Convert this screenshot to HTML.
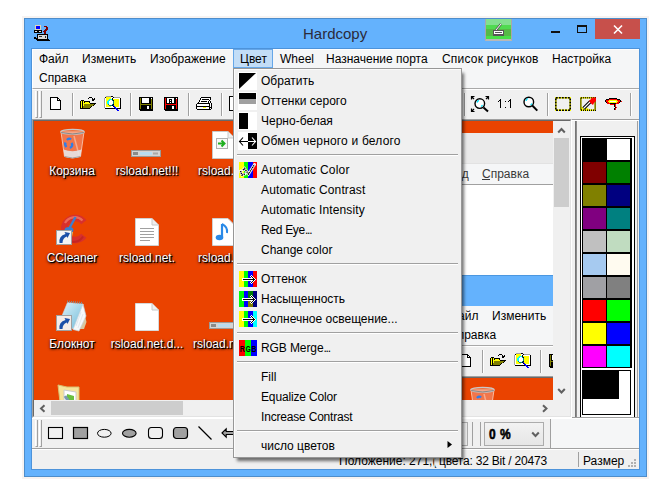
<!DOCTYPE html>
<html><head><meta charset="utf-8">
<style>
*{margin:0;padding:0;box-sizing:border-box}
html,body{width:672px;height:503px;overflow:hidden;background:#fff;font-family:"Liberation Sans",sans-serif;font-size:12px;color:#000}
.a{position:absolute}
svg{position:absolute;overflow:visible}
.t{position:absolute;white-space:nowrap;line-height:14px}
.lbl{position:absolute;white-space:nowrap;line-height:14px;color:#fff;text-shadow:1px 1px 0 #000,1px 1px 2px #000,0 1px 3px rgba(0,0,0,.75);text-align:center;width:90px}
.sep{position:absolute;width:2px;background:#A0A0A0;border-right:1px solid #fff}
.ms{position:absolute;left:237px;width:221px;height:2px;border-top:1px solid #A0A0A0;border-bottom:1px solid #fff}
</style></head><body>
<!-- faint window shadow -->
<div class="a" style="left:22px;top:16px;width:627px;height:463px;background:#f7f3f1"></div>
<!-- window frame -->
<div class="a" style="left:24px;top:18px;width:623px;height:459px;background:#64B2FD;border:1px solid #4E8DCA"></div>
<div class="a" style="left:31px;top:48px;width:609px;height:422px;border:1px solid #4D93DA"></div>
<!-- title icon -->
<svg style="left:34px;top:25px" width="16" height="16" shape-rendering="crispEdges">
<rect x="1" y="0" width="6" height="5" fill="#e0d4b8"/>
<rect x="2" y="1" width="4" height="3" fill="#0000ff"/>
<rect x="0" y="5" width="8" height="3" fill="#000"/>
<rect x="1" y="6" width="2" height="1" fill="#e8e8e8"/><rect x="5" y="6" width="2" height="1" fill="#e8e8e8"/>
<rect x="10" y="1" width="3" height="1" fill="#800000"/><rect x="12" y="2" width="2" height="3" fill="#800000"/><rect x="11" y="4" width="2" height="2" fill="#800000"/><rect x="10" y="5" width="2" height="4" fill="#800000"/><rect x="9" y="6" width="1" height="1" fill="#800000"/>
<rect x="3" y="9" width="11" height="7" fill="#000"/>
<rect x="4" y="10" width="9" height="4" fill="#d8d8d8"/>
<rect x="5" y="11" width="3" height="1" fill="#303030"/><rect x="11" y="11" width="1" height="2" fill="#303030"/>
<rect x="0" y="12" width="2" height="2" fill="#000"/><rect x="2" y="13" width="2" height="2" fill="#000"/>
<rect x="4" y="15" width="12" height="1" fill="#000"/><rect x="14" y="14" width="1" height="1" fill="#000"/>
</svg>
<!-- title -->
<div class="t" style="left:303px;top:26px;font-size:15px;line-height:15px;color:#2b2b3b">Hardcopy</div>
<!-- green button -->
<div class="a" style="left:485px;top:19px;width:27px;height:22px;border-left:1px solid #a8a8a8;border-right:1px solid #a8a8a8;border-bottom:2px solid #b8b8b8;background:linear-gradient(#83e08f 0,#83e08f 6px,#50da50 6px,#50da50 10px,#57b947 10px,#57b947 17px,#48e048 17px)"></div>
<div class="a" style="left:493px;top:30px;width:11px;height:6px;background:#fff;border:1px solid #555;border-bottom-width:2px"></div>
<div class="a" style="left:495px;top:32px;width:7px;height:1px;background:#555"></div>
<svg style="left:495px;top:23px" width="8" height="8"><path d="M1 7 L6 1" stroke="#555" stroke-width="2.2"/><path d="M1 7 L6 1" stroke="#fff" stroke-width="1"/></svg>
<!-- min max close -->
<div class="a" style="left:551px;top:31px;width:9px;height:2px;background:#111"></div>
<div class="a" style="left:577px;top:25px;width:10px;height:8px;border:1px solid #111;border-top-width:2px"></div>
<div class="a" style="left:595px;top:19px;width:45px;height:20px;background:#C7504B"></div>
<svg style="left:613px;top:25px" width="10" height="9"><path d="M1 0.5L9 8.5M9 0.5L1 8.5" stroke="#fff" stroke-width="1.6"/></svg>

<!-- client -->
<div class="a" style="left:32px;top:49px;width:607px;height:420px;background:#F0F0F0"></div>
<!-- menubar -->
<div class="a" style="left:32px;top:49px;width:607px;height:40px;background:#F5F6F7;border-bottom:1px solid #A9A9A9;border-top:1px solid #fff;border-left:1px solid #fff"></div>
<div class="t" style="left:39px;top:52px">Файл</div>
<div class="t" style="left:82px;top:52px">Изменить</div>
<div class="t" style="left:150px;top:52px">Изображение</div>
<div class="a" style="left:233px;top:49px;width:40px;height:19px;background:#C2DDF7;border:1px solid #66A7E8"></div>
<div class="t" style="left:240px;top:52px">Цвет</div>
<div class="t" style="left:280px;top:52px">Wheel</div>
<div class="t" style="left:326px;top:52px">Назначение порта</div>
<div class="t" style="left:442px;top:52px;letter-spacing:0.2px">Список рисунков</div>
<div class="t" style="left:552px;top:52px">Настройка</div>
<div class="t" style="left:39px;top:71px">Справка</div>

<!-- toolbar -->
<div class="a" style="left:32px;top:89px;width:607px;height:30px;background:#F0F0F0;border-top:1px solid #fff"></div>
<div id="toolbar"></div>
<!-- grip -->
<div class="a" style="left:35px;top:91px;width:3px;height:27px;border-left:1px solid #fff;border-right:1px solid #A0A0A0;border-bottom:1px solid #A0A0A0"></div>
<div class="a" style="left:39px;top:91px;width:3px;height:27px;border-left:1px solid #fff;border-right:1px solid #A0A0A0;border-bottom:1px solid #A0A0A0"></div>
<div class="sep" style="left:72px;top:93px;height:23px"></div>
<div class="sep" style="left:130px;top:93px;height:23px"></div>
<div class="sep" style="left:188px;top:93px;height:23px"></div>
<div class="sep" style="left:221px;top:93px;height:23px"></div>
<div class="sep" style="left:464px;top:93px;height:23px"></div>
<div class="sep" style="left:547px;top:93px;height:23px"></div>
<div class="sep" style="left:630px;top:93px;height:23px"></div>
<!-- new doc -->
<svg style="left:50px;top:97px" width="11" height="13" shape-rendering="crispEdges"><rect x="0" y="0" width="8" height="1" fill="#000"/><rect x="0" y="1" width="1" height="1" fill="#000"/><rect x="1" y="1" width="6" height="1" fill="#fff"/><rect x="7" y="1" width="2" height="1" fill="#000"/><rect x="0" y="2" width="1" height="1" fill="#000"/><rect x="1" y="2" width="6" height="1" fill="#fff"/><rect x="7" y="2" width="1" height="1" fill="#000"/><rect x="8" y="2" width="1" height="1" fill="#fff"/><rect x="9" y="2" width="1" height="1" fill="#000"/><rect x="0" y="3" width="1" height="1" fill="#000"/><rect x="1" y="3" width="6" height="1" fill="#fff"/><rect x="7" y="3" width="4" height="1" fill="#000"/><rect x="0" y="4" width="1" height="1" fill="#000"/><rect x="1" y="4" width="9" height="1" fill="#fff"/><rect x="10" y="4" width="1" height="1" fill="#000"/><rect x="0" y="5" width="1" height="1" fill="#000"/><rect x="1" y="5" width="9" height="1" fill="#fff"/><rect x="10" y="5" width="1" height="1" fill="#000"/><rect x="0" y="6" width="1" height="1" fill="#000"/><rect x="1" y="6" width="9" height="1" fill="#fff"/><rect x="10" y="6" width="1" height="1" fill="#000"/><rect x="0" y="7" width="1" height="1" fill="#000"/><rect x="1" y="7" width="9" height="1" fill="#fff"/><rect x="10" y="7" width="1" height="1" fill="#000"/><rect x="0" y="8" width="1" height="1" fill="#000"/><rect x="1" y="8" width="9" height="1" fill="#fff"/><rect x="10" y="8" width="1" height="1" fill="#000"/><rect x="0" y="9" width="1" height="1" fill="#000"/><rect x="1" y="9" width="9" height="1" fill="#fff"/><rect x="10" y="9" width="1" height="1" fill="#000"/><rect x="0" y="10" width="1" height="1" fill="#000"/><rect x="1" y="10" width="9" height="1" fill="#fff"/><rect x="10" y="10" width="1" height="1" fill="#000"/><rect x="0" y="11" width="1" height="1" fill="#000"/><rect x="1" y="11" width="9" height="1" fill="#fff"/><rect x="10" y="11" width="1" height="1" fill="#000"/><rect x="0" y="12" width="11" height="1" fill="#000"/></svg>
<!-- open -->
<svg style="left:79px;top:96px" width="17" height="13" shape-rendering="crispEdges"><rect x="10" y="1" width="3" height="1" fill="#000"/><rect x="9" y="2" width="1" height="1" fill="#000"/><rect x="13" y="2" width="1" height="1" fill="#000"/><rect x="15" y="2" width="1" height="1" fill="#000"/><rect x="13" y="3" width="3" height="1" fill="#000"/><rect x="2" y="4" width="3" height="1" fill="#000"/><rect x="13" y="4" width="2" height="1" fill="#000"/><rect x="1" y="5" width="1" height="1" fill="#000"/><rect x="2" y="5" width="1" height="1" fill="#ffff00"/><rect x="3" y="5" width="1" height="1" fill="#000"/><rect x="4" y="5" width="1" height="1" fill="#ffff00"/><rect x="5" y="5" width="6" height="1" fill="#000"/><rect x="1" y="6" width="1" height="1" fill="#000"/><rect x="2" y="6" width="1" height="1" fill="#ffff00"/><rect x="3" y="6" width="1" height="1" fill="#000"/><rect x="4" y="6" width="1" height="1" fill="#ffff00"/><rect x="5" y="6" width="1" height="1" fill="#000"/><rect x="6" y="6" width="4" height="1" fill="#ffff00"/><rect x="10" y="6" width="1" height="1" fill="#000"/><rect x="1" y="7" width="1" height="1" fill="#000"/><rect x="2" y="7" width="1" height="1" fill="#ffff00"/><rect x="3" y="7" width="1" height="1" fill="#000"/><rect x="4" y="7" width="7" height="1" fill="#ffff00"/><rect x="11" y="7" width="6" height="1" fill="#000"/><rect x="1" y="8" width="1" height="1" fill="#000"/><rect x="2" y="8" width="1" height="1" fill="#ffff00"/><rect x="3" y="8" width="1" height="1" fill="#000"/><rect x="4" y="8" width="1" height="1" fill="#ffff00"/><rect x="5" y="8" width="10" height="1" fill="#808000"/><rect x="15" y="8" width="1" height="1" fill="#000"/><rect x="1" y="9" width="1" height="1" fill="#000"/><rect x="2" y="9" width="1" height="1" fill="#ffff00"/><rect x="3" y="9" width="1" height="1" fill="#000"/><rect x="4" y="9" width="1" height="1" fill="#ffff00"/><rect x="5" y="9" width="9" height="1" fill="#808000"/><rect x="14" y="9" width="1" height="1" fill="#000"/><rect x="1" y="10" width="1" height="1" fill="#000"/><rect x="2" y="10" width="1" height="1" fill="#ffff00"/><rect x="3" y="10" width="1" height="1" fill="#000"/><rect x="4" y="10" width="8" height="1" fill="#808000"/><rect x="12" y="10" width="1" height="1" fill="#000"/><rect x="1" y="11" width="1" height="1" fill="#000"/><rect x="2" y="11" width="1" height="1" fill="#ffff00"/><rect x="3" y="11" width="1" height="1" fill="#000"/><rect x="4" y="11" width="7" height="1" fill="#808000"/><rect x="11" y="11" width="1" height="1" fill="#000"/><rect x="1" y="12" width="10" height="1" fill="#000"/></svg>
<!-- find -->
<svg style="left:104px;top:96px" width="18" height="16" shape-rendering="crispEdges"><rect x="2" y="0" width="5" height="1" fill="#a0a0a0"/><rect x="7" y="0" width="2" height="1" fill="#000"/><rect x="1" y="1" width="1" height="1" fill="#000"/><rect x="2" y="1" width="5" height="1" fill="#ffff00"/><rect x="7" y="1" width="2" height="1" fill="#ffffff"/><rect x="9" y="1" width="1" height="1" fill="#000"/><rect x="10" y="1" width="6" height="1" fill="#a0a0a0"/><rect x="0" y="2" width="1" height="1" fill="#a0a0a0"/><rect x="1" y="2" width="1" height="1" fill="#ffffff"/><rect x="2" y="2" width="5" height="1" fill="#ffff00"/><rect x="7" y="2" width="1" height="1" fill="#ffffff"/><rect x="8" y="2" width="1" height="1" fill="#000"/><rect x="9" y="2" width="7" height="1" fill="#ffffff"/><rect x="16" y="2" width="1" height="1" fill="#000"/><rect x="0" y="3" width="1" height="1" fill="#a0a0a0"/><rect x="1" y="3" width="1" height="1" fill="#ffffff"/><rect x="2" y="3" width="3" height="1" fill="#ffff00"/><rect x="5" y="3" width="3" height="1" fill="#00ffff"/><rect x="8" y="3" width="1" height="1" fill="#000"/><rect x="9" y="3" width="6" height="1" fill="#ffff00"/><rect x="15" y="3" width="1" height="1" fill="#ffffff"/><rect x="16" y="3" width="1" height="1" fill="#000"/><rect x="0" y="4" width="1" height="1" fill="#a0a0a0"/><rect x="1" y="4" width="1" height="1" fill="#ffffff"/><rect x="2" y="4" width="2" height="1" fill="#ffff00"/><rect x="4" y="4" width="2" height="1" fill="#00ffff"/><rect x="6" y="4" width="2" height="1" fill="#ffffff"/><rect x="8" y="4" width="1" height="1" fill="#008080"/><rect x="9" y="4" width="1" height="1" fill="#000"/><rect x="10" y="4" width="5" height="1" fill="#ffff00"/><rect x="15" y="4" width="1" height="1" fill="#ffffff"/><rect x="16" y="4" width="1" height="1" fill="#000"/><rect x="0" y="5" width="1" height="1" fill="#a0a0a0"/><rect x="1" y="5" width="1" height="1" fill="#ffffff"/><rect x="2" y="5" width="1" height="1" fill="#ffff00"/><rect x="3" y="5" width="2" height="1" fill="#00ffff"/><rect x="5" y="5" width="4" height="1" fill="#ffffff"/><rect x="9" y="5" width="1" height="1" fill="#008080"/><rect x="10" y="5" width="5" height="1" fill="#ffff00"/><rect x="15" y="5" width="1" height="1" fill="#ffffff"/><rect x="16" y="5" width="1" height="1" fill="#000"/><rect x="0" y="6" width="1" height="1" fill="#a0a0a0"/><rect x="1" y="6" width="1" height="1" fill="#ffffff"/><rect x="2" y="6" width="1" height="1" fill="#ffff00"/><rect x="3" y="6" width="2" height="1" fill="#00ffff"/><rect x="5" y="6" width="4" height="1" fill="#ffffff"/><rect x="9" y="6" width="1" height="1" fill="#008080"/><rect x="10" y="6" width="5" height="1" fill="#ffff00"/><rect x="15" y="6" width="1" height="1" fill="#ffffff"/><rect x="16" y="6" width="1" height="1" fill="#000"/><rect x="0" y="7" width="1" height="1" fill="#a0a0a0"/><rect x="1" y="7" width="1" height="1" fill="#ffffff"/><rect x="2" y="7" width="1" height="1" fill="#ffff00"/><rect x="3" y="7" width="2" height="1" fill="#00ffff"/><rect x="5" y="7" width="4" height="1" fill="#ffffff"/><rect x="9" y="7" width="1" height="1" fill="#008080"/><rect x="10" y="7" width="5" height="1" fill="#ffff00"/><rect x="15" y="7" width="1" height="1" fill="#ffffff"/><rect x="16" y="7" width="1" height="1" fill="#000"/><rect x="0" y="8" width="1" height="1" fill="#a0a0a0"/><rect x="1" y="8" width="1" height="1" fill="#ffffff"/><rect x="2" y="8" width="2" height="1" fill="#ffff00"/><rect x="4" y="8" width="1" height="1" fill="#008080"/><rect x="5" y="8" width="3" height="1" fill="#ffffff"/><rect x="8" y="8" width="1" height="1" fill="#008080"/><rect x="9" y="8" width="1" height="1" fill="#000"/><rect x="10" y="8" width="5" height="1" fill="#ffff00"/><rect x="15" y="8" width="1" height="1" fill="#ffffff"/><rect x="16" y="8" width="1" height="1" fill="#000"/><rect x="0" y="9" width="1" height="1" fill="#a0a0a0"/><rect x="1" y="9" width="1" height="1" fill="#ffffff"/><rect x="2" y="9" width="3" height="1" fill="#ffff00"/><rect x="5" y="9" width="3" height="1" fill="#008080"/><rect x="8" y="9" width="1" height="1" fill="#000"/><rect x="9" y="9" width="1" height="1" fill="#0000ff"/><rect x="10" y="9" width="5" height="1" fill="#ffff00"/><rect x="15" y="9" width="1" height="1" fill="#ffffff"/><rect x="16" y="9" width="1" height="1" fill="#000"/><rect x="0" y="10" width="1" height="1" fill="#a0a0a0"/><rect x="1" y="10" width="1" height="1" fill="#ffffff"/><rect x="2" y="10" width="5" height="1" fill="#ffff00"/><rect x="7" y="10" width="2" height="1" fill="#ffffff"/><rect x="9" y="10" width="1" height="1" fill="#000"/><rect x="10" y="10" width="1" height="1" fill="#0000ff"/><rect x="11" y="10" width="4" height="1" fill="#ffff00"/><rect x="15" y="10" width="1" height="1" fill="#ffffff"/><rect x="16" y="10" width="1" height="1" fill="#000"/><rect x="0" y="11" width="1" height="1" fill="#a0a0a0"/><rect x="1" y="11" width="9" height="1" fill="#ffffff"/><rect x="10" y="11" width="2" height="1" fill="#0000ff"/><rect x="12" y="11" width="4" height="1" fill="#ffffff"/><rect x="16" y="11" width="1" height="1" fill="#000"/><rect x="1" y="12" width="10" height="1" fill="#000"/><rect x="11" y="12" width="2" height="1" fill="#0000ff"/><rect x="13" y="12" width="4" height="1" fill="#000"/><rect x="12" y="13" width="2" height="1" fill="#0000ff"/><rect x="13" y="14" width="2" height="1" fill="#0000ff"/></svg>
<!-- save olive -->
<svg style="left:139px;top:97px" width="14" height="14" shape-rendering="crispEdges"><rect x="0" y="0" width="14" height="1" fill="#000"/><rect x="0" y="1" width="1" height="1" fill="#000"/><rect x="1" y="1" width="1" height="1" fill="#808000"/><rect x="2" y="1" width="1" height="1" fill="#000"/><rect x="3" y="1" width="7" height="1" fill="#fff"/><rect x="10" y="1" width="2" height="1" fill="#000"/><rect x="12" y="1" width="1" height="1" fill="#fff"/><rect x="13" y="1" width="1" height="1" fill="#000"/><rect x="0" y="2" width="1" height="1" fill="#000"/><rect x="1" y="2" width="1" height="1" fill="#808000"/><rect x="2" y="2" width="1" height="1" fill="#000"/><rect x="3" y="2" width="7" height="1" fill="#fff"/><rect x="10" y="2" width="2" height="1" fill="#000"/><rect x="12" y="2" width="1" height="1" fill="#808000"/><rect x="13" y="2" width="1" height="1" fill="#000"/><rect x="0" y="3" width="1" height="1" fill="#000"/><rect x="1" y="3" width="1" height="1" fill="#808000"/><rect x="2" y="3" width="1" height="1" fill="#000"/><rect x="3" y="3" width="7" height="1" fill="#fff"/><rect x="10" y="3" width="2" height="1" fill="#000"/><rect x="12" y="3" width="1" height="1" fill="#808000"/><rect x="13" y="3" width="1" height="1" fill="#000"/><rect x="0" y="4" width="1" height="1" fill="#000"/><rect x="1" y="4" width="1" height="1" fill="#808000"/><rect x="2" y="4" width="1" height="1" fill="#000"/><rect x="3" y="4" width="7" height="1" fill="#fff"/><rect x="10" y="4" width="2" height="1" fill="#000"/><rect x="12" y="4" width="1" height="1" fill="#808000"/><rect x="13" y="4" width="1" height="1" fill="#000"/><rect x="0" y="5" width="1" height="1" fill="#000"/><rect x="1" y="5" width="1" height="1" fill="#808000"/><rect x="2" y="5" width="1" height="1" fill="#000"/><rect x="3" y="5" width="7" height="1" fill="#fff"/><rect x="10" y="5" width="2" height="1" fill="#000"/><rect x="12" y="5" width="1" height="1" fill="#808000"/><rect x="13" y="5" width="1" height="1" fill="#000"/><rect x="0" y="6" width="1" height="1" fill="#000"/><rect x="1" y="6" width="1" height="1" fill="#808000"/><rect x="2" y="6" width="10" height="1" fill="#000"/><rect x="12" y="6" width="1" height="1" fill="#808000"/><rect x="13" y="6" width="1" height="1" fill="#000"/><rect x="0" y="7" width="1" height="1" fill="#000"/><rect x="1" y="7" width="12" height="1" fill="#808000"/><rect x="13" y="7" width="1" height="1" fill="#000"/><rect x="0" y="8" width="1" height="1" fill="#000"/><rect x="1" y="8" width="1" height="1" fill="#808000"/><rect x="2" y="8" width="10" height="1" fill="#000"/><rect x="12" y="8" width="1" height="1" fill="#808000"/><rect x="13" y="8" width="1" height="1" fill="#000"/><rect x="0" y="9" width="1" height="1" fill="#000"/><rect x="1" y="9" width="1" height="1" fill="#808000"/><rect x="2" y="9" width="6" height="1" fill="#000"/><rect x="8" y="9" width="2" height="1" fill="#fff"/><rect x="10" y="9" width="2" height="1" fill="#000"/><rect x="12" y="9" width="1" height="1" fill="#808000"/><rect x="13" y="9" width="1" height="1" fill="#000"/><rect x="0" y="10" width="1" height="1" fill="#000"/><rect x="1" y="10" width="1" height="1" fill="#808000"/><rect x="2" y="10" width="6" height="1" fill="#000"/><rect x="8" y="10" width="2" height="1" fill="#fff"/><rect x="10" y="10" width="2" height="1" fill="#000"/><rect x="12" y="10" width="1" height="1" fill="#808000"/><rect x="13" y="10" width="1" height="1" fill="#000"/><rect x="0" y="11" width="1" height="1" fill="#000"/><rect x="1" y="11" width="1" height="1" fill="#808000"/><rect x="2" y="11" width="6" height="1" fill="#000"/><rect x="8" y="11" width="2" height="1" fill="#fff"/><rect x="10" y="11" width="2" height="1" fill="#000"/><rect x="12" y="11" width="1" height="1" fill="#808000"/><rect x="13" y="11" width="1" height="1" fill="#000"/><rect x="0" y="12" width="14" height="1" fill="#000"/><rect x="1" y="13" width="13" height="1" fill="#000"/></svg>
<!-- save red -->
<svg style="left:164px;top:97px" width="14" height="14" shape-rendering="crispEdges"><rect x="0" y="0" width="14" height="1" fill="#000"/><rect x="0" y="1" width="1" height="1" fill="#000"/><rect x="1" y="1" width="1" height="1" fill="#ff0000"/><rect x="2" y="1" width="1" height="1" fill="#000"/><rect x="3" y="1" width="7" height="1" fill="#fff"/><rect x="10" y="1" width="2" height="1" fill="#000"/><rect x="12" y="1" width="1" height="1" fill="#fff"/><rect x="13" y="1" width="1" height="1" fill="#000"/><rect x="0" y="2" width="1" height="1" fill="#000"/><rect x="1" y="2" width="1" height="1" fill="#ff0000"/><rect x="2" y="2" width="1" height="1" fill="#000"/><rect x="3" y="2" width="2" height="1" fill="#fff"/><rect x="5" y="2" width="3" height="1" fill="#000"/><rect x="8" y="2" width="2" height="1" fill="#fff"/><rect x="10" y="2" width="2" height="1" fill="#000"/><rect x="12" y="2" width="1" height="1" fill="#ff0000"/><rect x="13" y="2" width="1" height="1" fill="#000"/><rect x="0" y="3" width="1" height="1" fill="#000"/><rect x="1" y="3" width="1" height="1" fill="#ff0000"/><rect x="2" y="3" width="1" height="1" fill="#000"/><rect x="3" y="3" width="2" height="1" fill="#fff"/><rect x="5" y="3" width="1" height="1" fill="#000"/><rect x="6" y="3" width="1" height="1" fill="#fff"/><rect x="7" y="3" width="1" height="1" fill="#000"/><rect x="8" y="3" width="2" height="1" fill="#fff"/><rect x="10" y="3" width="2" height="1" fill="#000"/><rect x="12" y="3" width="1" height="1" fill="#ff0000"/><rect x="13" y="3" width="1" height="1" fill="#000"/><rect x="0" y="4" width="1" height="1" fill="#000"/><rect x="1" y="4" width="1" height="1" fill="#ff0000"/><rect x="2" y="4" width="1" height="1" fill="#000"/><rect x="3" y="4" width="2" height="1" fill="#fff"/><rect x="5" y="4" width="3" height="1" fill="#000"/><rect x="8" y="4" width="2" height="1" fill="#fff"/><rect x="10" y="4" width="2" height="1" fill="#000"/><rect x="12" y="4" width="1" height="1" fill="#ff0000"/><rect x="13" y="4" width="1" height="1" fill="#000"/><rect x="0" y="5" width="1" height="1" fill="#000"/><rect x="1" y="5" width="1" height="1" fill="#ff0000"/><rect x="2" y="5" width="1" height="1" fill="#000"/><rect x="3" y="5" width="2" height="1" fill="#fff"/><rect x="5" y="5" width="1" height="1" fill="#000"/><rect x="6" y="5" width="1" height="1" fill="#fff"/><rect x="7" y="5" width="1" height="1" fill="#000"/><rect x="8" y="5" width="2" height="1" fill="#fff"/><rect x="10" y="5" width="2" height="1" fill="#000"/><rect x="12" y="5" width="1" height="1" fill="#ff0000"/><rect x="13" y="5" width="1" height="1" fill="#000"/><rect x="0" y="6" width="1" height="1" fill="#000"/><rect x="1" y="6" width="1" height="1" fill="#ff0000"/><rect x="2" y="6" width="10" height="1" fill="#000"/><rect x="12" y="6" width="1" height="1" fill="#ff0000"/><rect x="13" y="6" width="1" height="1" fill="#000"/><rect x="0" y="7" width="1" height="1" fill="#000"/><rect x="1" y="7" width="12" height="1" fill="#ff0000"/><rect x="13" y="7" width="1" height="1" fill="#000"/><rect x="0" y="8" width="1" height="1" fill="#000"/><rect x="1" y="8" width="1" height="1" fill="#ff0000"/><rect x="2" y="8" width="10" height="1" fill="#000"/><rect x="12" y="8" width="1" height="1" fill="#ff0000"/><rect x="13" y="8" width="1" height="1" fill="#000"/><rect x="0" y="9" width="1" height="1" fill="#000"/><rect x="1" y="9" width="1" height="1" fill="#ff0000"/><rect x="2" y="9" width="6" height="1" fill="#000"/><rect x="8" y="9" width="2" height="1" fill="#fff"/><rect x="10" y="9" width="2" height="1" fill="#000"/><rect x="12" y="9" width="1" height="1" fill="#ff0000"/><rect x="13" y="9" width="1" height="1" fill="#000"/><rect x="0" y="10" width="1" height="1" fill="#000"/><rect x="1" y="10" width="1" height="1" fill="#ff0000"/><rect x="2" y="10" width="6" height="1" fill="#000"/><rect x="8" y="10" width="2" height="1" fill="#fff"/><rect x="10" y="10" width="2" height="1" fill="#000"/><rect x="12" y="10" width="1" height="1" fill="#ff0000"/><rect x="13" y="10" width="1" height="1" fill="#000"/><rect x="0" y="11" width="1" height="1" fill="#000"/><rect x="1" y="11" width="1" height="1" fill="#ff0000"/><rect x="2" y="11" width="6" height="1" fill="#000"/><rect x="8" y="11" width="2" height="1" fill="#fff"/><rect x="10" y="11" width="2" height="1" fill="#000"/><rect x="12" y="11" width="1" height="1" fill="#ff0000"/><rect x="13" y="11" width="1" height="1" fill="#000"/><rect x="0" y="12" width="14" height="1" fill="#000"/><rect x="1" y="13" width="13" height="1" fill="#000"/></svg>
<!-- printer -->
<svg style="left:196px;top:97px" width="17" height="13" shape-rendering="crispEdges"><rect x="5" y="0" width="10" height="1" fill="#000"/><rect x="4" y="1" width="1" height="1" fill="#000"/><rect x="5" y="1" width="9" height="1" fill="#fff"/><rect x="14" y="1" width="1" height="1" fill="#000"/><rect x="4" y="2" width="1" height="1" fill="#000"/><rect x="5" y="2" width="1" height="1" fill="#fff"/><rect x="6" y="2" width="7" height="1" fill="#000"/><rect x="13" y="2" width="1" height="1" fill="#fff"/><rect x="14" y="2" width="1" height="1" fill="#000"/><rect x="3" y="3" width="1" height="1" fill="#000"/><rect x="4" y="3" width="9" height="1" fill="#fff"/><rect x="13" y="3" width="1" height="1" fill="#000"/><rect x="3" y="4" width="1" height="1" fill="#000"/><rect x="4" y="4" width="1" height="1" fill="#fff"/><rect x="5" y="4" width="6" height="1" fill="#000"/><rect x="11" y="4" width="1" height="1" fill="#fff"/><rect x="12" y="4" width="1" height="1" fill="#000"/><rect x="13" y="4" width="1" height="1" fill="#fff"/><rect x="14" y="4" width="1" height="1" fill="#000"/><rect x="2" y="5" width="1" height="1" fill="#000"/><rect x="3" y="5" width="9" height="1" fill="#fff"/><rect x="12" y="5" width="1" height="1" fill="#000"/><rect x="13" y="5" width="1" height="1" fill="#fff"/><rect x="14" y="5" width="1" height="1" fill="#000"/><rect x="1" y="6" width="13" height="1" fill="#000"/><rect x="14" y="6" width="1" height="1" fill="#fff"/><rect x="15" y="6" width="1" height="1" fill="#000"/><rect x="0" y="7" width="1" height="1" fill="#000"/><rect x="1" y="7" width="12" height="1" fill="#fff"/><rect x="13" y="7" width="1" height="1" fill="#000"/><rect x="14" y="7" width="1" height="1" fill="#fff"/><rect x="15" y="7" width="1" height="1" fill="#000"/><rect x="0" y="8" width="1" height="1" fill="#000"/><rect x="1" y="8" width="12" height="1" fill="#fff"/><rect x="13" y="8" width="1" height="1" fill="#000"/><rect x="14" y="8" width="1" height="1" fill="#fff"/><rect x="15" y="8" width="1" height="1" fill="#000"/><rect x="0" y="9" width="14" height="1" fill="#000"/><rect x="14" y="9" width="1" height="1" fill="#fff"/><rect x="15" y="9" width="1" height="1" fill="#000"/><rect x="0" y="10" width="1" height="1" fill="#000"/><rect x="1" y="10" width="6" height="1" fill="#fff"/><rect x="7" y="10" width="3" height="1" fill="#ffff00"/><rect x="10" y="10" width="3" height="1" fill="#fff"/><rect x="13" y="10" width="3" height="1" fill="#000"/><rect x="0" y="11" width="1" height="1" fill="#000"/><rect x="1" y="11" width="12" height="1" fill="#fff"/><rect x="13" y="11" width="1" height="1" fill="#000"/><rect x="14" y="11" width="1" height="1" fill="#fff"/><rect x="15" y="11" width="1" height="1" fill="#000"/><rect x="1" y="12" width="14" height="1" fill="#000"/></svg>
<!-- partial copy -->
<div class="a" style="left:229px;top:96px;width:6px;height:15px;background:#fff;border:1px solid #000;border-right:none"></div>
<!-- zoom fit -->
<svg style="left:471px;top:96px" width="19" height="16"><path d="M0.5 3.5 V0.5 H3.5 M0.5 0.5 L3 3 M17.5 3.5 V0.5 H14.5 M17.5 0.5 L15 3 M0.5 12.5 V15.5 H3.5 M0.5 15.5 L3 13" fill="none" stroke="#000" stroke-width="1.2"/><circle cx="8.8" cy="7.6" r="4.8" fill="#fff" stroke="#000" stroke-width="1.4"/><path d="M6 6.5 A3 3 0 0 1 8 4.3 M10 10.5 A3 3 0 0 0 11.5 9" stroke="#00e5ff" stroke-width="1.3" fill="none"/><path d="M12.5 11.5 L17 15.5" stroke="#000" stroke-width="2"/></svg>
<svg style="left:498px;top:99px" width="13" height="9" shape-rendering="crispEdges"><rect x="2" y="0" width="1" height="1" fill="#000"/><rect x="12" y="0" width="1" height="1" fill="#000"/><rect x="1" y="1" width="2" height="1" fill="#000"/><rect x="11" y="1" width="2" height="1" fill="#000"/><rect x="0" y="2" width="1" height="1" fill="#000"/><rect x="2" y="2" width="1" height="1" fill="#000"/><rect x="7" y="2" width="1" height="1" fill="#000"/><rect x="10" y="2" width="1" height="1" fill="#000"/><rect x="12" y="2" width="1" height="1" fill="#000"/><rect x="2" y="3" width="1" height="1" fill="#000"/><rect x="12" y="3" width="1" height="1" fill="#000"/><rect x="2" y="4" width="1" height="1" fill="#000"/><rect x="12" y="4" width="1" height="1" fill="#000"/><rect x="2" y="5" width="1" height="1" fill="#000"/><rect x="12" y="5" width="1" height="1" fill="#000"/><rect x="2" y="6" width="1" height="1" fill="#000"/><rect x="12" y="6" width="1" height="1" fill="#000"/><rect x="2" y="7" width="1" height="1" fill="#000"/><rect x="12" y="7" width="1" height="1" fill="#000"/><rect x="2" y="8" width="1" height="1" fill="#000"/><rect x="7" y="8" width="1" height="1" fill="#000"/><rect x="12" y="8" width="1" height="1" fill="#000"/></svg>
<!-- magnifier -->
<svg style="left:523px;top:96px" width="16" height="16"><circle cx="5.8" cy="6" r="4.8" fill="#fff" stroke="#000" stroke-width="1.4"/><path d="M3 5 A3 3 0 0 1 5 2.5 M7.5 9 A3 3 0 0 0 9 7.5" stroke="#00e5ff" stroke-width="1.3" fill="none"/><path d="M9.5 9.8 L14.3 14.6" stroke="#000" stroke-width="2"/></svg>
<!-- dashed rect -->
<svg style="left:555px;top:97px" width="17" height="14"><rect x="0.8" y="0.8" width="14.4" height="12.4" fill="none" stroke="#ffff00" stroke-width="1.6"/><rect x="0.8" y="0.8" width="14.4" height="12.4" fill="none" stroke="#000" stroke-width="1.6" stroke-dasharray="2 1"/></svg>
<!-- magic wand -->
<svg style="left:580px;top:97px" width="17" height="14"><path d="M1 10 Q5 9.5 9 12 V13.5 H1 Z" fill="#ffff00"/><rect x="0.8" y="0.8" width="14.4" height="12.4" fill="none" stroke="#ffff00" stroke-width="1.6"/><rect x="0.8" y="0.8" width="14.4" height="12.4" fill="none" stroke="#000" stroke-width="1.6" stroke-dasharray="1 1"/><path d="M3.5 11.5 L10.5 4.5" stroke="#000" stroke-width="3.2"/><path d="M3.5 11.5 L10.5 4.5" stroke="#fff" stroke-width="1.1"/><path d="M9 4 L11 2 L12 0 L13 1.5 L14 0 L15 1 L16 0 V4 L14 6 L13 8 L11 6.5 Z" fill="#ff0000"/></svg>
<!-- lasso -->
<svg style="left:605px;top:98px" width="17" height="13" shape-rendering="crispEdges"><rect x="4" y="0" width="8" height="1" fill="#000"/><rect x="1" y="1" width="3" height="1" fill="#000"/><rect x="4" y="1" width="8" height="1" fill="#ff0000"/><rect x="12" y="1" width="3" height="1" fill="#000"/><rect x="0" y="2" width="1" height="1" fill="#000"/><rect x="1" y="2" width="3" height="1" fill="#ff0000"/><rect x="4" y="2" width="8" height="1" fill="#ffff00"/><rect x="12" y="2" width="3" height="1" fill="#ff0000"/><rect x="15" y="2" width="1" height="1" fill="#000"/><rect x="0" y="3" width="1" height="1" fill="#000"/><rect x="1" y="3" width="2" height="1" fill="#ff0000"/><rect x="3" y="3" width="2" height="1" fill="#ffff00"/><rect x="5" y="3" width="6" height="1" fill="#fffff0"/><rect x="11" y="3" width="2" height="1" fill="#ffff00"/><rect x="13" y="3" width="2" height="1" fill="#ff0000"/><rect x="15" y="3" width="1" height="1" fill="#000"/><rect x="16" y="3" width="1" height="1" fill="#ff0000"/><rect x="1" y="4" width="1" height="1" fill="#000"/><rect x="2" y="4" width="2" height="1" fill="#ff0000"/><rect x="4" y="4" width="8" height="1" fill="#ffff00"/><rect x="12" y="4" width="2" height="1" fill="#ff0000"/><rect x="14" y="4" width="1" height="1" fill="#000"/><rect x="2" y="5" width="3" height="1" fill="#ff0000"/><rect x="5" y="5" width="6" height="1" fill="#000"/><rect x="11" y="5" width="3" height="1" fill="#ff0000"/><rect x="5" y="6" width="4" height="1" fill="#ff0000"/><rect x="9" y="6" width="1" height="1" fill="#000"/><rect x="10" y="6" width="1" height="1" fill="#ff0000"/><rect x="9" y="7" width="1" height="1" fill="#000"/><rect x="10" y="7" width="1" height="1" fill="#ff0000"/><rect x="9" y="8" width="1" height="1" fill="#000"/><rect x="10" y="8" width="1" height="1" fill="#ff0000"/><rect x="10" y="9" width="1" height="1" fill="#000"/><rect x="11" y="9" width="1" height="1" fill="#ff0000"/><rect x="9" y="10" width="1" height="1" fill="#000"/><rect x="10" y="10" width="1" height="1" fill="#ff0000"/><rect x="9" y="11" width="1" height="1" fill="#000"/><rect x="10" y="11" width="1" height="1" fill="#ff0000"/></svg>


<!-- image frame -->
<div class="a" style="left:32px;top:119px;width:540px;height:299px;background:#F0F0F0;border-top:1px solid #A0A0A0;border-left:1px solid #A0A0A0;border-bottom:1px solid #fff;border-right:1px solid #fff"></div>
<div class="a" style="left:33px;top:120px;width:538px;height:297px;border-top:1px solid #696969;border-left:1px solid #696969;border-bottom:1px solid #E3E3E3;border-right:1px solid #E3E3E3"></div>
<div class="a" style="left:34px;top:121px;width:519px;height:279px;background:#EA4300;overflow:hidden" id="vp">
<div class="a" style="left:-34px;top:-121px;width:672px;height:503px">
<!-- other window (Вид Справка) -->
<div class="a" style="left:300px;top:133px;width:300px;height:30px;background:#EAEAEA"></div>
<div class="a" style="left:300px;top:163px;width:300px;height:22px;background:#F5F6F7;border-top:1px solid #E2E2E2;border-bottom:1px solid #A0A0A0"></div>
<div class="t" style="left:447px;top:167px;color:#3a3a3a">Вид</div>
<div class="t" style="left:482px;top:167px;color:#3a3a3a">Справка</div>
<div class="a" style="left:482px;top:179px;width:8px;height:1px;background:#3a3a3a"></div>
<div class="a" style="left:300px;top:185px;width:300px;height:90px;background:#fff"></div>
<!-- captured hardcopy window -->
<div class="a" style="left:434px;top:275px;width:300px;height:31px;background:#64B2FD;border-top:1px solid #4B97E0"></div>
<div class="a" style="left:442px;top:306px;width:300px;height:40px;background:#F5F6F7;border-bottom:1px solid #A9A9A9"></div>
<div class="t" style="left:449px;top:309px">Файл</div>
<div class="t" style="left:492px;top:309px">Изменить</div>
<div class="t" style="left:449px;top:328px">Справка</div>
<div class="a" style="left:442px;top:346px;width:300px;height:30px;background:#F0F0F0;border-top:1px solid #fff"></div>
<svg style="left:460px;top:354px" width="11" height="13" shape-rendering="crispEdges"><rect x="0" y="0" width="8" height="1" fill="#000"/><rect x="0" y="1" width="1" height="1" fill="#000"/><rect x="1" y="1" width="6" height="1" fill="#fff"/><rect x="7" y="1" width="2" height="1" fill="#000"/><rect x="0" y="2" width="1" height="1" fill="#000"/><rect x="1" y="2" width="6" height="1" fill="#fff"/><rect x="7" y="2" width="1" height="1" fill="#000"/><rect x="8" y="2" width="1" height="1" fill="#fff"/><rect x="9" y="2" width="1" height="1" fill="#000"/><rect x="0" y="3" width="1" height="1" fill="#000"/><rect x="1" y="3" width="6" height="1" fill="#fff"/><rect x="7" y="3" width="4" height="1" fill="#000"/><rect x="0" y="4" width="1" height="1" fill="#000"/><rect x="1" y="4" width="9" height="1" fill="#fff"/><rect x="10" y="4" width="1" height="1" fill="#000"/><rect x="0" y="5" width="1" height="1" fill="#000"/><rect x="1" y="5" width="9" height="1" fill="#fff"/><rect x="10" y="5" width="1" height="1" fill="#000"/><rect x="0" y="6" width="1" height="1" fill="#000"/><rect x="1" y="6" width="9" height="1" fill="#fff"/><rect x="10" y="6" width="1" height="1" fill="#000"/><rect x="0" y="7" width="1" height="1" fill="#000"/><rect x="1" y="7" width="9" height="1" fill="#fff"/><rect x="10" y="7" width="1" height="1" fill="#000"/><rect x="0" y="8" width="1" height="1" fill="#000"/><rect x="1" y="8" width="9" height="1" fill="#fff"/><rect x="10" y="8" width="1" height="1" fill="#000"/><rect x="0" y="9" width="1" height="1" fill="#000"/><rect x="1" y="9" width="9" height="1" fill="#fff"/><rect x="10" y="9" width="1" height="1" fill="#000"/><rect x="0" y="10" width="1" height="1" fill="#000"/><rect x="1" y="10" width="9" height="1" fill="#fff"/><rect x="10" y="10" width="1" height="1" fill="#000"/><rect x="0" y="11" width="1" height="1" fill="#000"/><rect x="1" y="11" width="9" height="1" fill="#fff"/><rect x="10" y="11" width="1" height="1" fill="#000"/><rect x="0" y="12" width="11" height="1" fill="#000"/></svg>
<div class="sep" style="left:482px;top:350px;height:23px"></div>
<svg style="left:489px;top:353px" width="17" height="13" shape-rendering="crispEdges"><rect x="10" y="1" width="3" height="1" fill="#000"/><rect x="9" y="2" width="1" height="1" fill="#000"/><rect x="13" y="2" width="1" height="1" fill="#000"/><rect x="15" y="2" width="1" height="1" fill="#000"/><rect x="13" y="3" width="3" height="1" fill="#000"/><rect x="2" y="4" width="3" height="1" fill="#000"/><rect x="13" y="4" width="2" height="1" fill="#000"/><rect x="1" y="5" width="1" height="1" fill="#000"/><rect x="2" y="5" width="1" height="1" fill="#ffff00"/><rect x="3" y="5" width="1" height="1" fill="#000"/><rect x="4" y="5" width="1" height="1" fill="#ffff00"/><rect x="5" y="5" width="6" height="1" fill="#000"/><rect x="1" y="6" width="1" height="1" fill="#000"/><rect x="2" y="6" width="1" height="1" fill="#ffff00"/><rect x="3" y="6" width="1" height="1" fill="#000"/><rect x="4" y="6" width="1" height="1" fill="#ffff00"/><rect x="5" y="6" width="1" height="1" fill="#000"/><rect x="6" y="6" width="4" height="1" fill="#ffff00"/><rect x="10" y="6" width="1" height="1" fill="#000"/><rect x="1" y="7" width="1" height="1" fill="#000"/><rect x="2" y="7" width="1" height="1" fill="#ffff00"/><rect x="3" y="7" width="1" height="1" fill="#000"/><rect x="4" y="7" width="7" height="1" fill="#ffff00"/><rect x="11" y="7" width="6" height="1" fill="#000"/><rect x="1" y="8" width="1" height="1" fill="#000"/><rect x="2" y="8" width="1" height="1" fill="#ffff00"/><rect x="3" y="8" width="1" height="1" fill="#000"/><rect x="4" y="8" width="1" height="1" fill="#ffff00"/><rect x="5" y="8" width="10" height="1" fill="#808000"/><rect x="15" y="8" width="1" height="1" fill="#000"/><rect x="1" y="9" width="1" height="1" fill="#000"/><rect x="2" y="9" width="1" height="1" fill="#ffff00"/><rect x="3" y="9" width="1" height="1" fill="#000"/><rect x="4" y="9" width="1" height="1" fill="#ffff00"/><rect x="5" y="9" width="9" height="1" fill="#808000"/><rect x="14" y="9" width="1" height="1" fill="#000"/><rect x="1" y="10" width="1" height="1" fill="#000"/><rect x="2" y="10" width="1" height="1" fill="#ffff00"/><rect x="3" y="10" width="1" height="1" fill="#000"/><rect x="4" y="10" width="8" height="1" fill="#808000"/><rect x="12" y="10" width="1" height="1" fill="#000"/><rect x="1" y="11" width="1" height="1" fill="#000"/><rect x="2" y="11" width="1" height="1" fill="#ffff00"/><rect x="3" y="11" width="1" height="1" fill="#000"/><rect x="4" y="11" width="7" height="1" fill="#808000"/><rect x="11" y="11" width="1" height="1" fill="#000"/><rect x="1" y="12" width="10" height="1" fill="#000"/></svg>
<svg style="left:514px;top:353px" width="18" height="16" shape-rendering="crispEdges"><rect x="2" y="0" width="5" height="1" fill="#a0a0a0"/><rect x="7" y="0" width="2" height="1" fill="#000"/><rect x="1" y="1" width="1" height="1" fill="#000"/><rect x="2" y="1" width="5" height="1" fill="#ffff00"/><rect x="7" y="1" width="2" height="1" fill="#ffffff"/><rect x="9" y="1" width="1" height="1" fill="#000"/><rect x="10" y="1" width="6" height="1" fill="#a0a0a0"/><rect x="0" y="2" width="1" height="1" fill="#a0a0a0"/><rect x="1" y="2" width="1" height="1" fill="#ffffff"/><rect x="2" y="2" width="5" height="1" fill="#ffff00"/><rect x="7" y="2" width="1" height="1" fill="#ffffff"/><rect x="8" y="2" width="1" height="1" fill="#000"/><rect x="9" y="2" width="7" height="1" fill="#ffffff"/><rect x="16" y="2" width="1" height="1" fill="#000"/><rect x="0" y="3" width="1" height="1" fill="#a0a0a0"/><rect x="1" y="3" width="1" height="1" fill="#ffffff"/><rect x="2" y="3" width="3" height="1" fill="#ffff00"/><rect x="5" y="3" width="3" height="1" fill="#00ffff"/><rect x="8" y="3" width="1" height="1" fill="#000"/><rect x="9" y="3" width="6" height="1" fill="#ffff00"/><rect x="15" y="3" width="1" height="1" fill="#ffffff"/><rect x="16" y="3" width="1" height="1" fill="#000"/><rect x="0" y="4" width="1" height="1" fill="#a0a0a0"/><rect x="1" y="4" width="1" height="1" fill="#ffffff"/><rect x="2" y="4" width="2" height="1" fill="#ffff00"/><rect x="4" y="4" width="2" height="1" fill="#00ffff"/><rect x="6" y="4" width="2" height="1" fill="#ffffff"/><rect x="8" y="4" width="1" height="1" fill="#008080"/><rect x="9" y="4" width="1" height="1" fill="#000"/><rect x="10" y="4" width="5" height="1" fill="#ffff00"/><rect x="15" y="4" width="1" height="1" fill="#ffffff"/><rect x="16" y="4" width="1" height="1" fill="#000"/><rect x="0" y="5" width="1" height="1" fill="#a0a0a0"/><rect x="1" y="5" width="1" height="1" fill="#ffffff"/><rect x="2" y="5" width="1" height="1" fill="#ffff00"/><rect x="3" y="5" width="2" height="1" fill="#00ffff"/><rect x="5" y="5" width="4" height="1" fill="#ffffff"/><rect x="9" y="5" width="1" height="1" fill="#008080"/><rect x="10" y="5" width="5" height="1" fill="#ffff00"/><rect x="15" y="5" width="1" height="1" fill="#ffffff"/><rect x="16" y="5" width="1" height="1" fill="#000"/><rect x="0" y="6" width="1" height="1" fill="#a0a0a0"/><rect x="1" y="6" width="1" height="1" fill="#ffffff"/><rect x="2" y="6" width="1" height="1" fill="#ffff00"/><rect x="3" y="6" width="2" height="1" fill="#00ffff"/><rect x="5" y="6" width="4" height="1" fill="#ffffff"/><rect x="9" y="6" width="1" height="1" fill="#008080"/><rect x="10" y="6" width="5" height="1" fill="#ffff00"/><rect x="15" y="6" width="1" height="1" fill="#ffffff"/><rect x="16" y="6" width="1" height="1" fill="#000"/><rect x="0" y="7" width="1" height="1" fill="#a0a0a0"/><rect x="1" y="7" width="1" height="1" fill="#ffffff"/><rect x="2" y="7" width="1" height="1" fill="#ffff00"/><rect x="3" y="7" width="2" height="1" fill="#00ffff"/><rect x="5" y="7" width="4" height="1" fill="#ffffff"/><rect x="9" y="7" width="1" height="1" fill="#008080"/><rect x="10" y="7" width="5" height="1" fill="#ffff00"/><rect x="15" y="7" width="1" height="1" fill="#ffffff"/><rect x="16" y="7" width="1" height="1" fill="#000"/><rect x="0" y="8" width="1" height="1" fill="#a0a0a0"/><rect x="1" y="8" width="1" height="1" fill="#ffffff"/><rect x="2" y="8" width="2" height="1" fill="#ffff00"/><rect x="4" y="8" width="1" height="1" fill="#008080"/><rect x="5" y="8" width="3" height="1" fill="#ffffff"/><rect x="8" y="8" width="1" height="1" fill="#008080"/><rect x="9" y="8" width="1" height="1" fill="#000"/><rect x="10" y="8" width="5" height="1" fill="#ffff00"/><rect x="15" y="8" width="1" height="1" fill="#ffffff"/><rect x="16" y="8" width="1" height="1" fill="#000"/><rect x="0" y="9" width="1" height="1" fill="#a0a0a0"/><rect x="1" y="9" width="1" height="1" fill="#ffffff"/><rect x="2" y="9" width="3" height="1" fill="#ffff00"/><rect x="5" y="9" width="3" height="1" fill="#008080"/><rect x="8" y="9" width="1" height="1" fill="#000"/><rect x="9" y="9" width="1" height="1" fill="#0000ff"/><rect x="10" y="9" width="5" height="1" fill="#ffff00"/><rect x="15" y="9" width="1" height="1" fill="#ffffff"/><rect x="16" y="9" width="1" height="1" fill="#000"/><rect x="0" y="10" width="1" height="1" fill="#a0a0a0"/><rect x="1" y="10" width="1" height="1" fill="#ffffff"/><rect x="2" y="10" width="5" height="1" fill="#ffff00"/><rect x="7" y="10" width="2" height="1" fill="#ffffff"/><rect x="9" y="10" width="1" height="1" fill="#000"/><rect x="10" y="10" width="1" height="1" fill="#0000ff"/><rect x="11" y="10" width="4" height="1" fill="#ffff00"/><rect x="15" y="10" width="1" height="1" fill="#ffffff"/><rect x="16" y="10" width="1" height="1" fill="#000"/><rect x="0" y="11" width="1" height="1" fill="#a0a0a0"/><rect x="1" y="11" width="9" height="1" fill="#ffffff"/><rect x="10" y="11" width="2" height="1" fill="#0000ff"/><rect x="12" y="11" width="4" height="1" fill="#ffffff"/><rect x="16" y="11" width="1" height="1" fill="#000"/><rect x="1" y="12" width="10" height="1" fill="#000"/><rect x="11" y="12" width="2" height="1" fill="#0000ff"/><rect x="13" y="12" width="4" height="1" fill="#000"/><rect x="12" y="13" width="2" height="1" fill="#0000ff"/><rect x="13" y="14" width="2" height="1" fill="#0000ff"/></svg>
<div class="sep" style="left:540px;top:350px;height:23px"></div>
<svg style="left:549px;top:354px" width="14" height="14" shape-rendering="crispEdges"><rect x="0" y="0" width="14" height="1" fill="#000"/><rect x="0" y="1" width="1" height="1" fill="#000"/><rect x="1" y="1" width="1" height="1" fill="#808000"/><rect x="2" y="1" width="1" height="1" fill="#000"/><rect x="3" y="1" width="7" height="1" fill="#fff"/><rect x="10" y="1" width="2" height="1" fill="#000"/><rect x="12" y="1" width="1" height="1" fill="#fff"/><rect x="13" y="1" width="1" height="1" fill="#000"/><rect x="0" y="2" width="1" height="1" fill="#000"/><rect x="1" y="2" width="1" height="1" fill="#808000"/><rect x="2" y="2" width="1" height="1" fill="#000"/><rect x="3" y="2" width="7" height="1" fill="#fff"/><rect x="10" y="2" width="2" height="1" fill="#000"/><rect x="12" y="2" width="1" height="1" fill="#808000"/><rect x="13" y="2" width="1" height="1" fill="#000"/><rect x="0" y="3" width="1" height="1" fill="#000"/><rect x="1" y="3" width="1" height="1" fill="#808000"/><rect x="2" y="3" width="1" height="1" fill="#000"/><rect x="3" y="3" width="7" height="1" fill="#fff"/><rect x="10" y="3" width="2" height="1" fill="#000"/><rect x="12" y="3" width="1" height="1" fill="#808000"/><rect x="13" y="3" width="1" height="1" fill="#000"/><rect x="0" y="4" width="1" height="1" fill="#000"/><rect x="1" y="4" width="1" height="1" fill="#808000"/><rect x="2" y="4" width="1" height="1" fill="#000"/><rect x="3" y="4" width="7" height="1" fill="#fff"/><rect x="10" y="4" width="2" height="1" fill="#000"/><rect x="12" y="4" width="1" height="1" fill="#808000"/><rect x="13" y="4" width="1" height="1" fill="#000"/><rect x="0" y="5" width="1" height="1" fill="#000"/><rect x="1" y="5" width="1" height="1" fill="#808000"/><rect x="2" y="5" width="1" height="1" fill="#000"/><rect x="3" y="5" width="7" height="1" fill="#fff"/><rect x="10" y="5" width="2" height="1" fill="#000"/><rect x="12" y="5" width="1" height="1" fill="#808000"/><rect x="13" y="5" width="1" height="1" fill="#000"/><rect x="0" y="6" width="1" height="1" fill="#000"/><rect x="1" y="6" width="1" height="1" fill="#808000"/><rect x="2" y="6" width="10" height="1" fill="#000"/><rect x="12" y="6" width="1" height="1" fill="#808000"/><rect x="13" y="6" width="1" height="1" fill="#000"/><rect x="0" y="7" width="1" height="1" fill="#000"/><rect x="1" y="7" width="12" height="1" fill="#808000"/><rect x="13" y="7" width="1" height="1" fill="#000"/><rect x="0" y="8" width="1" height="1" fill="#000"/><rect x="1" y="8" width="1" height="1" fill="#808000"/><rect x="2" y="8" width="10" height="1" fill="#000"/><rect x="12" y="8" width="1" height="1" fill="#808000"/><rect x="13" y="8" width="1" height="1" fill="#000"/><rect x="0" y="9" width="1" height="1" fill="#000"/><rect x="1" y="9" width="1" height="1" fill="#808000"/><rect x="2" y="9" width="6" height="1" fill="#000"/><rect x="8" y="9" width="2" height="1" fill="#fff"/><rect x="10" y="9" width="2" height="1" fill="#000"/><rect x="12" y="9" width="1" height="1" fill="#808000"/><rect x="13" y="9" width="1" height="1" fill="#000"/><rect x="0" y="10" width="1" height="1" fill="#000"/><rect x="1" y="10" width="1" height="1" fill="#808000"/><rect x="2" y="10" width="6" height="1" fill="#000"/><rect x="8" y="10" width="2" height="1" fill="#fff"/><rect x="10" y="10" width="2" height="1" fill="#000"/><rect x="12" y="10" width="1" height="1" fill="#808000"/><rect x="13" y="10" width="1" height="1" fill="#000"/><rect x="0" y="11" width="1" height="1" fill="#000"/><rect x="1" y="11" width="1" height="1" fill="#808000"/><rect x="2" y="11" width="6" height="1" fill="#000"/><rect x="8" y="11" width="2" height="1" fill="#fff"/><rect x="10" y="11" width="2" height="1" fill="#000"/><rect x="12" y="11" width="1" height="1" fill="#808000"/><rect x="13" y="11" width="1" height="1" fill="#000"/><rect x="0" y="12" width="14" height="1" fill="#000"/><rect x="1" y="13" width="13" height="1" fill="#000"/></svg>
<div class="a" style="left:442px;top:376px;width:300px;height:1px;background:#A0A0A0"></div><div class="a" style="left:443px;top:377px;width:300px;height:1px;background:#696969"></div>
<!-- captured recycle bin -->
<svg style="left:470px;top:386px" width="26" height="32"><path d="M1 4 L4.5 28.5 Q12.5 31.5 20.5 28.5 L24 4 Z" fill="#f5a088" fill-opacity="0.55" stroke="#f8d0c0" stroke-width="0.8"/><path d="M14 8 L19 27" stroke="#f9c0a8" stroke-width="1.5" opacity="0.7"/><path d="M3.5 21.5 Q12.5 25 21.5 21.5 L20.5 28.5 Q12.5 31.5 4.5 28.5 Z" fill="#e6e6e6" fill-opacity="0.9"/><path d="M4.5 28.5 Q12.5 31.5 20.5 28.5" stroke="#a0a0a0" stroke-width="1" fill="none"/><ellipse cx="12.5" cy="3.8" rx="11.7" ry="2.4" fill="#f8b8a0" fill-opacity="0.4" stroke="#c8c8c8" stroke-width="1.3"/><path d="M1.2 4.5 Q12.5 7.5 23.8 4.5" stroke="#808080" stroke-width="0.9" fill="none"/><path d="M7 12 Q9 9.5 11 11.5 M11.5 15 Q13.5 18 10 20 M6.5 19 Q4.5 17 5.5 14.5" stroke="#2f7ee8" stroke-width="2.4" fill="none"/></svg>

<!-- desktop icons -->
<!-- recycle bin -->
<svg style="left:60px;top:128px" width="26" height="32"><path d="M1 4 L4.5 28.5 Q12.5 31.5 20.5 28.5 L24 4 Z" fill="#f5a088" fill-opacity="0.55" stroke="#f8d0c0" stroke-width="0.8"/><path d="M14 8 L19 27" stroke="#f9c0a8" stroke-width="1.5" opacity="0.7"/><path d="M3.5 21.5 Q12.5 25 21.5 21.5 L20.5 28.5 Q12.5 31.5 4.5 28.5 Z" fill="#e6e6e6" fill-opacity="0.9"/><path d="M4.5 28.5 Q12.5 31.5 20.5 28.5" stroke="#a0a0a0" stroke-width="1" fill="none"/><ellipse cx="12.5" cy="3.8" rx="11.7" ry="2.4" fill="#f8b8a0" fill-opacity="0.4" stroke="#c8c8c8" stroke-width="1.3"/><path d="M1.2 4.5 Q12.5 7.5 23.8 4.5" stroke="#808080" stroke-width="0.9" fill="none"/><path d="M7 12 Q9 9.5 11 11.5 M11.5 15 Q13.5 18 10 20 M6.5 19 Q4.5 17 5.5 14.5" stroke="#2f7ee8" stroke-width="2.4" fill="none"/></svg>
<div class="lbl" style="left:27px;top:164px">Корзина</div>
<!-- rsload bar -->
<svg style="left:131px;top:150px" width="31" height="8"><rect x="0.5" y="0.5" width="29" height="6" fill="#d4d4d4" stroke="#9a9a9a"/><rect x="2" y="2" width="5" height="3" fill="#8a8a8a"/><rect x="9" y="2" width="12" height="3" fill="#b8dcf0"/><rect x="22" y="2.5" width="5" height="2" fill="#a8a8a8"/></svg>
<div class="lbl" style="left:102px;top:164px">rsload.net!!!</div>
<!-- file with green arrow -->
<svg style="left:212px;top:131px" width="24" height="28"><path d="M0.5 0.5 H16 L22.5 7 V27.5 H0.5 Z" fill="#fff" stroke="#c8c8c8"/><path d="M16 0.5 V7 H22.5" fill="#eee" stroke="#c8c8c8"/><rect x="4.5" y="7.5" width="11" height="10" fill="#f8f8f8" stroke="#b0b0b0"/><path d="M6 12.5 H12 M9.5 9.5 L12.5 12.5 L9.5 15.5" stroke="#20b020" stroke-width="2" fill="none"/></svg>
<div class="t" style="left:198px;top:164px;color:#fff;text-shadow:1px 1px 0 #000,1px 1px 2px #000,0 1px 3px rgba(0,0,0,.75)">rsload.net</div>
<!-- ccleaner -->
<svg style="left:56px;top:214px" width="34" height="32"><path d="M27.8 8.2 A11 11 0 1 0 27.8 21.8" fill="none" stroke="#d8302c" stroke-width="6.5"/><path d="M26.5 6.5 A11 11 0 0 0 9 9" fill="none" stroke="#f07868" stroke-width="2.2" opacity="0.8"/><path d="M10 25 A11 11 0 0 0 27 22.5" fill="none" stroke="#b82020" stroke-width="2" opacity="0.6"/><path d="M19.5 3 L13.5 14" stroke="#3a7ed0" stroke-width="2.4"/><ellipse cx="13" cy="16" rx="4.5" ry="3" fill="#3a7ed0"/><path d="M10 18 L17 18 L16 23 L11 23 Z" fill="#e8c060"/><rect x="0.5" y="16.5" width="15" height="14" fill="#f4f4f4" stroke="#a0a0a0"/><path d="M3.5 29 Q2.5 22 9.5 20 L8.5 18 L14 19 L11.5 24 L10.8 22.5 Q6.5 24 6.5 29 Z" fill="#1a4fa8"/></svg>
<div class="lbl" style="left:27px;top:251px">CCleaner</div>
<!-- doc with lines -->
<svg style="left:135px;top:218px" width="25" height="28"><path d="M0.5 0.5 H17 L23.5 7 V27.5 H0.5 Z" fill="#fff" stroke="#d0d0d0"/><path d="M17 0.5 V7 H23.5" fill="#eee" stroke="#c8c8c8"/><path d="M5 10.5 H19 M5 13.5 H19 M5 16.5 H19 M5 19.5 H19 M5 22.5 H15" stroke="#a0a0a0" stroke-width="1"/></svg>
<div class="lbl" style="left:102px;top:251px">rsload.net.</div>
<!-- music doc -->
<svg style="left:212px;top:218px" width="24" height="28"><path d="M0.5 0.5 H16 L22.5 7 V27.5 H0.5 Z" fill="#fff" stroke="#d0d0d0"/><path d="M10 6 V19" stroke="#2a8ae8" stroke-width="2.2"/><ellipse cx="7.5" cy="19.5" rx="3.8" ry="2.8" fill="#2a8ae8"/><path d="M10 6 Q16 9 15 15" stroke="#2a8ae8" stroke-width="2" fill="none"/></svg>
<div class="t" style="left:198px;top:251px;color:#fff;text-shadow:1px 1px 0 #000,1px 1px 2px #000,0 1px 3px rgba(0,0,0,.75)">rsload.net</div>
<!-- notepad -->
<svg style="left:56px;top:298px" width="34" height="36"><defs><linearGradient id="np" x1="0" y1="0" x2="1" y2="1"><stop offset="0" stop-color="#e8f4f8"/><stop offset="0.5" stop-color="#a8d8ea"/><stop offset="1" stop-color="#70b8d8"/></linearGradient></defs><path d="M26 6 L30.5 24 L28 31 L22 31 Z" fill="#d8c8a0"/><path d="M11.5 4.5 L27 6 L19 31.5 L3 25 Z" fill="url(#np)" stroke="#c8dce4" stroke-width="0.6"/><path d="M27 6 L30 18 L23 33 L17 31.5 Z" fill="#f6f9fb" stroke="#c4d4dc" stroke-width="0.7"/><path d="M25 14 L20 28 M27 16 L22 30" stroke="#d0dde6" stroke-width="0.6"/><path d="M11 3.5 L27 5" stroke="#8a8a8a" stroke-width="2" stroke-dasharray="1 1"/><rect x="0.5" y="17.5" width="15" height="15" fill="#f4ece8" stroke="#a0a0a0"/><path d="M3.5 31 Q2.5 24 9.5 22 L8.5 20 L14 21 L11.5 26 L10.8 24.5 Q6.5 26 6.5 31 Z" fill="#1a4fa8"/></svg>
<div class="lbl" style="left:27px;top:337px">Блокнот</div>
<!-- blank doc -->
<svg style="left:135px;top:303px" width="25" height="29"><path d="M0.5 0.5 H17 L23.5 7 V27.5 H0.5 Z" fill="#fff" stroke="#d8d8d8"/><path d="M17 0.5 V7 H23.5" fill="#eee" stroke="#c8c8c8"/></svg>
<div class="lbl" style="left:102px;top:337px">rsload.net.d...</div>
<!-- bar -->
<svg style="left:209px;top:322px" width="31" height="8"><rect x="0.5" y="0.5" width="29" height="6" fill="#d4d4d4" stroke="#9a9a9a"/><rect x="2" y="2" width="5" height="3" fill="#8a8a8a"/><rect x="9" y="2" width="12" height="3" fill="#b8dcf0"/></svg>
<div class="t" style="left:193px;top:337px;color:#fff;text-shadow:1px 1px 0 #000,1px 1px 2px #000,0 1px 3px rgba(0,0,0,.75)">rsload.net</div>
<!-- folder row 4 -->
<svg style="left:57px;top:384px" width="26" height="18"><path d="M1 1 L10 3 L22 3 L22 18 L3 18 Z" fill="#f6e39a" stroke="#d8c070"/><path d="M7 6 L19 8 L19 18 L7 18 Z" fill="#fff" stroke="#ccc"/><path d="M10 10 L17 12 L17 18 L10 18 Z" fill="#6ac040"/><path d="M8 12 L12 18" stroke="#7a9ab0" stroke-width="3"/></svg>
<!-- partial captured bin row4 col 3? -->
</div>
</div>
<!-- v scrollbar -->
<div class="a" style="left:553px;top:121px;width:17px;height:279px;background:#F0F0F0"></div>
<div class="a" style="left:554px;top:138px;width:15px;height:69px;background:#CDCDCD"></div>
<!-- h scrollbar -->
<div class="a" style="left:34px;top:400px;width:519px;height:16px;background:#F0F0F0"></div>
<div class="a" style="left:51px;top:401px;width:132px;height:14px;background:#CDCDCD"></div>

<!-- palette panel -->
<div class="a" style="left:572px;top:120px;width:67px;height:298px;background:#F0F0F0"></div>

<div class="a" style="left:580px;top:136px;width:55px;height:281px;border:1px solid #000;border-bottom:none;background:#fff"></div>
<div class="a" style="left:582px;top:138px;width:50px;height:230px;background:#000"></div>
<div class="a" style="left:583px;top:139px;width:23px;height:21px;background:#000000"></div>
<div class="a" style="left:607px;top:139px;width:23px;height:21px;background:#ffffff"></div>
<div class="a" style="left:583px;top:162px;width:23px;height:21px;background:#800000"></div>
<div class="a" style="left:607px;top:162px;width:23px;height:21px;background:#008000"></div>
<div class="a" style="left:583px;top:185px;width:23px;height:21px;background:#808000"></div>
<div class="a" style="left:607px;top:185px;width:23px;height:21px;background:#000080"></div>
<div class="a" style="left:583px;top:208px;width:23px;height:21px;background:#800080"></div>
<div class="a" style="left:607px;top:208px;width:23px;height:21px;background:#008080"></div>
<div class="a" style="left:583px;top:231px;width:23px;height:21px;background:#C0C0C0"></div>
<div class="a" style="left:607px;top:231px;width:23px;height:21px;background:#C0DCC0"></div>
<div class="a" style="left:583px;top:254px;width:23px;height:21px;background:#A6CAF0"></div>
<div class="a" style="left:607px;top:254px;width:23px;height:21px;background:#FFFBF0"></div>
<div class="a" style="left:583px;top:277px;width:23px;height:21px;background:#A0A0A4"></div>
<div class="a" style="left:607px;top:277px;width:23px;height:21px;background:#808080"></div>
<div class="a" style="left:583px;top:300px;width:23px;height:21px;background:#FF0000"></div>
<div class="a" style="left:607px;top:300px;width:23px;height:21px;background:#00FF00"></div>
<div class="a" style="left:583px;top:323px;width:23px;height:21px;background:#FFFF00"></div>
<div class="a" style="left:607px;top:323px;width:23px;height:21px;background:#0000FF"></div>
<div class="a" style="left:583px;top:346px;width:23px;height:21px;background:#FF00FF"></div>
<div class="a" style="left:607px;top:346px;width:23px;height:21px;background:#00FFFF"></div>
<div class="a" style="left:582px;top:370px;width:49px;height:45px;border:1px solid #000;background:#fff"></div>
<div class="a" style="left:583px;top:371px;width:36px;height:28px;background:#000"></div>

<!-- palette panel borders -->
<div class="a" style="left:572px;top:119px;width:67px;height:1px;background:#A0A0A0"></div>
<div class="a" style="left:572px;top:120px;width:67px;height:1px;background:#fff"></div>
<div class="a" style="left:575px;top:121px;width:2px;height:296px;background:linear-gradient(90deg,#696969,#9a9a9a)"></div>
<div class="a" style="left:637px;top:121px;width:1px;height:296px;background:#A0A0A0"></div>
<div class="a" style="left:572px;top:417px;width:67px;height:1px;background:#A0A0A0"></div>
<!-- scroll arrows -->
<svg style="left:557px;top:126px" width="10" height="8"><path d="M1.2 6.5 L4.5 3 L7.8 6.5" fill="none" stroke="#606060" stroke-width="2"/></svg>
<svg style="left:557px;top:387px" width="10" height="8"><path d="M1.2 2 L4.5 5.5 L7.8 2" fill="none" stroke="#606060" stroke-width="2"/></svg>
<svg style="left:38px;top:404px" width="8" height="10"><path d="M6.5 1.2 L3 4.5 L6.5 7.8" fill="none" stroke="#606060" stroke-width="2"/></svg>
<svg style="left:541px;top:404px" width="8" height="10"><path d="M2 1.2 L5.5 4.5 L2 7.8" fill="none" stroke="#606060" stroke-width="2"/></svg>
<!-- bottom toolbar band -->
<div class="a" style="left:32px;top:418px;width:607px;height:31px;background:#F5F6F7;border-top:1px solid #fff;border-bottom:1px solid #A0A0A0"></div>
<div class="a" style="left:32px;top:419px;width:519px;height:29px;background:#F0F0F0;border-right:1px solid #A0A0A0"></div>
<div class="a" style="left:35px;top:420px;width:3px;height:27px;border-left:1px solid #fff;border-right:1px solid #A0A0A0;border-bottom:1px solid #A0A0A0"></div>
<div class="a" style="left:39px;top:420px;width:3px;height:27px;border-left:1px solid #fff;border-right:1px solid #A0A0A0;border-bottom:1px solid #A0A0A0"></div>
<svg style="left:48px;top:427px" width="16" height="13"><rect x="0.5" y="0.5" width="14" height="11" fill="none" stroke="#000" stroke-width="1.1"/></svg>
<svg style="left:73px;top:427px" width="16" height="13"><rect x="0.5" y="0.5" width="14" height="11" fill="#A0A0A0" stroke="#000" stroke-width="1.2"/></svg>
<svg style="left:97px;top:429px" width="16" height="10"><ellipse cx="7.3" cy="4.3" rx="6.8" ry="3.9" fill="none" stroke="#000" stroke-width="1"/></svg>
<svg style="left:122px;top:429px" width="16" height="10"><ellipse cx="7.3" cy="4.3" rx="6.8" ry="3.9" fill="#A0A0A0" stroke="#000" stroke-width="1.1"/></svg>
<svg style="left:148px;top:427px" width="16" height="13"><rect x="0.5" y="0.5" width="14" height="11" rx="3" fill="none" stroke="#000" stroke-width="1.1"/></svg>
<svg style="left:173px;top:427px" width="16" height="13"><rect x="0.5" y="0.5" width="14" height="11" rx="3" fill="#A0A0A0" stroke="#000" stroke-width="1.2"/></svg>
<svg style="left:198px;top:426px" width="15" height="15"><path d="M0.5 0.5 L13.5 13.5" stroke="#000" stroke-width="1.3"/></svg>
<svg style="left:221px;top:428px" width="14" height="12"><path d="M1 5 L5.2 0.8 V3.5 H13 V6.5 H5.2 V9.2 Z" fill="#A0A0A0" stroke="#000" stroke-width="1.1"/></svg>
<div class="a" style="left:450px;top:422px;width:18px;height:24px;border:1px solid #ACACAC;background:#ECECEC"></div>
<div class="a" style="left:472px;top:422px;width:1px;height:24px;background:#A0A0A0"></div>
<div class="a" style="left:480px;top:422px;width:1px;height:24px;background:#A0A0A0"></div>
<div class="a" style="left:484px;top:422px;width:60px;height:24px;border:1px solid #ACACAC;background:linear-gradient(#F2F2F2,#E6E6E6)"></div>
<div class="t" style="left:489px;top:425px;font-size:15px;line-height:17px;font-weight:bold;letter-spacing:0.6px;transform:scaleX(0.8);transform-origin:0 0;-webkit-text-stroke:0.6px #000">0 %</div>
<svg style="left:531px;top:431px" width="10" height="8"><path d="M1.2 1.5 L4.5 5 L7.8 1.5" fill="none" stroke="#606060" stroke-width="2"/></svg>
<!-- status bar -->
<div class="a" style="left:32px;top:449px;width:607px;height:20px;background:#F0F0F0;border-top:1px solid #fff"></div>
<div class="t" style="left:339px;top:454px">Положение: 271,(</div>
<div class="a" style="left:434px;top:452px;width:1px;height:15px;background:#C8C8C8"></div>
<div class="t" style="left:439px;top:454px;letter-spacing:-0.2px">цвета: 32 Bit / 20473</div>
<div class="a" style="left:578px;top:452px;width:1px;height:15px;background:#A0A0A0"></div>
<div class="t" style="left:583px;top:454px">Размер</div>
<svg style="left:628px;top:459px" width="10" height="9"><g fill="#B0B0B0"><rect x="6" y="0" width="2" height="2"/><rect x="3" y="3" width="2" height="2"/><rect x="6" y="3" width="2" height="2"/><rect x="0" y="6" width="2" height="2"/><rect x="3" y="6" width="2" height="2"/><rect x="6" y="6" width="2" height="2"/></g></svg>


<!-- dropdown menu -->

<div class="a" style="left:233px;top:68px;width:229px;height:390px;background:#F0F0F0;border:1px solid #979797;box-shadow:3px 4px 3px -1px rgba(0,0,0,.55)"></div>
<div class="a" style="left:234px;top:69px;width:227px;height:388px;border-top:1px solid #FCFCFC;border-left:1px solid #FCFCFC"></div>
<div id="menuicons"></div>
<svg style="left:238px;top:72px" width="20" height="18" shape-rendering="crispEdges"><rect x="0" y="0" width="19" height="18" fill="#fff"/><path d="M1 1 H18 L1 17 Z" fill="#000" shape-rendering="auto"/></svg>
<svg style="left:238px;top:92px" width="20" height="18" shape-rendering="crispEdges"><rect x="0" y="0" width="19" height="18" fill="#fff"/><rect x="1" y="1" width="17" height="6" fill="#000"/><rect x="1" y="7" width="17" height="5" fill="#A0A0A0"/></svg>
<svg style="left:238px;top:112px" width="20" height="18" shape-rendering="crispEdges"><rect x="0" y="0" width="19" height="18" fill="#fff"/><rect x="1" y="1" width="9" height="16" fill="#000"/></svg>
<svg style="left:238px;top:132px" width="20" height="18" shape-rendering="crispEdges"><rect x="0" y="0" width="19" height="18" fill="#fff"/><rect x="10" y="1" width="9" height="16" fill="#000"/><rect x="1" y="9" width="9" height="1" fill="#000"/><rect x="10" y="9" width="8" height="1" fill="#fff"/><path d="M5 5.5 L1.5 9.5 L5 13.5" fill="none" stroke="#000" stroke-width="1.1" shape-rendering="auto"/><path d="M14 5.5 L17.5 9.5 L14 13.5" fill="none" stroke="#fff" stroke-width="1.1" shape-rendering="auto"/></svg>
<svg style="left:239px;top:162px" width="18" height="16" shape-rendering="crispEdges"><rect x="0" width="5" height="16" fill="#ffff00"/><rect x="5" width="4" height="16" fill="#00ff00"/><rect x="9" width="5" height="16" fill="#0000ff"/><rect x="14" width="4" height="16" fill="#ff0000"/><path d="M1.5 9 L3 13 L6 12 M4 8 L5.5 6.5 L9.5 12 L15.5 2.5" fill="none" stroke="#fff" stroke-width="2.8" shape-rendering="auto" stroke-linecap="round"/><path d="M1.5 9 L3 13 L6 12 M4 8 L5.5 6.5 L9.5 12 L15.5 2.5" fill="none" stroke="#000" stroke-width="1.5" stroke-dasharray="1.2 0.8" shape-rendering="auto"/></svg>
<svg style="left:239px;top:271px" width="18" height="16" shape-rendering="crispEdges"><rect x="0" width="5" height="16" fill="#ffff00"/><rect x="5" width="4" height="16" fill="#00ff00"/><rect x="9" width="5" height="16" fill="#0000ff"/><rect x="14" width="4" height="16" fill="#ff0000"/><rect x="12" y="4" width="1" height="1" fill="#fff"/><rect x="11" y="5" width="1" height="1" fill="#fff"/><rect x="12" y="5" width="1" height="1" fill="#000"/><rect x="13" y="5" width="1" height="1" fill="#fff"/><rect x="12" y="6" width="1" height="1" fill="#fff"/><rect x="13" y="6" width="1" height="1" fill="#000"/><rect x="14" y="6" width="1" height="1" fill="#fff"/><rect x="3" y="7" width="11" height="1" fill="#fff"/><rect x="14" y="7" width="1" height="1" fill="#000"/><rect x="15" y="7" width="1" height="1" fill="#fff"/><rect x="3" y="8" width="1" height="1" fill="#fff"/><rect x="4" y="8" width="12" height="1" fill="#000"/><rect x="16" y="8" width="1" height="1" fill="#fff"/><rect x="3" y="9" width="11" height="1" fill="#fff"/><rect x="14" y="9" width="1" height="1" fill="#000"/><rect x="15" y="9" width="1" height="1" fill="#fff"/><rect x="12" y="10" width="1" height="1" fill="#fff"/><rect x="13" y="10" width="1" height="1" fill="#000"/><rect x="14" y="10" width="1" height="1" fill="#fff"/><rect x="11" y="11" width="1" height="1" fill="#fff"/><rect x="12" y="11" width="1" height="1" fill="#000"/><rect x="13" y="11" width="1" height="1" fill="#fff"/><rect x="12" y="12" width="1" height="1" fill="#fff"/></svg>
<svg style="left:239px;top:291px" width="18" height="16" shape-rendering="crispEdges"><rect x="0" width="5" height="16" fill="#00ff00"/><rect x="5" width="4" height="16" fill="#0000ff"/><rect x="9" width="5" height="8" fill="#008000"/><rect x="9" y="8" width="5" height="8" fill="#808000"/><rect x="14" width="4" height="16" fill="#000080"/><rect x="12" y="4" width="1" height="1" fill="#fff"/><rect x="11" y="5" width="1" height="1" fill="#fff"/><rect x="12" y="5" width="1" height="1" fill="#000"/><rect x="13" y="5" width="1" height="1" fill="#fff"/><rect x="12" y="6" width="1" height="1" fill="#fff"/><rect x="13" y="6" width="1" height="1" fill="#000"/><rect x="14" y="6" width="1" height="1" fill="#fff"/><rect x="3" y="7" width="11" height="1" fill="#fff"/><rect x="14" y="7" width="1" height="1" fill="#000"/><rect x="15" y="7" width="1" height="1" fill="#fff"/><rect x="3" y="8" width="1" height="1" fill="#fff"/><rect x="4" y="8" width="12" height="1" fill="#000"/><rect x="16" y="8" width="1" height="1" fill="#fff"/><rect x="3" y="9" width="11" height="1" fill="#fff"/><rect x="14" y="9" width="1" height="1" fill="#000"/><rect x="15" y="9" width="1" height="1" fill="#fff"/><rect x="12" y="10" width="1" height="1" fill="#fff"/><rect x="13" y="10" width="1" height="1" fill="#000"/><rect x="14" y="10" width="1" height="1" fill="#fff"/><rect x="11" y="11" width="1" height="1" fill="#fff"/><rect x="12" y="11" width="1" height="1" fill="#000"/><rect x="13" y="11" width="1" height="1" fill="#fff"/><rect x="12" y="12" width="1" height="1" fill="#fff"/></svg>
<svg style="left:239px;top:311px" width="18" height="16" shape-rendering="crispEdges"><rect x="0" width="5" height="16" fill="#ffff00"/><rect x="5" width="4" height="16" fill="#00ff00"/><rect x="9" width="5" height="16" fill="#0000ff"/><rect x="14" width="4" height="16" fill="#00ffff"/><rect x="12" y="4" width="1" height="1" fill="#fff"/><rect x="11" y="5" width="1" height="1" fill="#fff"/><rect x="12" y="5" width="1" height="1" fill="#000"/><rect x="13" y="5" width="1" height="1" fill="#fff"/><rect x="12" y="6" width="1" height="1" fill="#fff"/><rect x="13" y="6" width="1" height="1" fill="#000"/><rect x="14" y="6" width="1" height="1" fill="#fff"/><rect x="3" y="7" width="11" height="1" fill="#fff"/><rect x="14" y="7" width="1" height="1" fill="#000"/><rect x="15" y="7" width="1" height="1" fill="#fff"/><rect x="3" y="8" width="1" height="1" fill="#fff"/><rect x="4" y="8" width="12" height="1" fill="#000"/><rect x="16" y="8" width="1" height="1" fill="#fff"/><rect x="3" y="9" width="11" height="1" fill="#fff"/><rect x="14" y="9" width="1" height="1" fill="#000"/><rect x="15" y="9" width="1" height="1" fill="#fff"/><rect x="12" y="10" width="1" height="1" fill="#fff"/><rect x="13" y="10" width="1" height="1" fill="#000"/><rect x="14" y="10" width="1" height="1" fill="#fff"/><rect x="11" y="11" width="1" height="1" fill="#fff"/><rect x="12" y="11" width="1" height="1" fill="#000"/><rect x="13" y="11" width="1" height="1" fill="#fff"/><rect x="12" y="12" width="1" height="1" fill="#fff"/></svg>
<svg style="left:239px;top:340px" width="18" height="16" shape-rendering="crispEdges"><rect x="0" width="6" height="16" fill="#ff0000"/><rect x="6" width="6" height="16" fill="#00ff00"/><rect x="12" width="6" height="16" fill="#0000ff"/><text x="0.8" y="12" font-family="Liberation Sans" font-size="8.5" font-weight="bold" fill="#000" textLength="5" lengthAdjust="spacingAndGlyphs">R</text><text x="6.8" y="12" font-family="Liberation Sans" font-size="8.5" font-weight="bold" fill="#000" textLength="5" lengthAdjust="spacingAndGlyphs">G</text><text x="12.5" y="12" font-family="Liberation Sans" font-size="8.5" font-weight="bold" fill="#000" textLength="5" lengthAdjust="spacingAndGlyphs">B</text></svg>

<div class="t" style="left:261px;top:74px">Обратить</div>
<div class="t" style="left:261px;top:94px">Оттенки серого</div>
<div class="t" style="left:261px;top:114px">Черно-белая</div>
<div class="t" style="left:261px;top:134px;letter-spacing:0.19px">Обмен черного и белого</div>
<div class="ms" style="top:154px"></div>
<div class="t" style="left:261px;top:163px;letter-spacing:0.22px">Automatic Color</div>
<div class="t" style="left:261px;top:183px;letter-spacing:0.13px">Automatic Contrast</div>
<div class="t" style="left:261px;top:203px;letter-spacing:0.13px">Automatic Intensity</div>
<div class="t" style="left:261px;top:223px;letter-spacing:-0.3px">Red Eye<span style="letter-spacing:-1.2px">...</span></div>
<div class="t" style="left:261px;top:243px">Change color</div>
<div class="ms" style="top:263px"></div>
<div class="t" style="left:261px;top:272px">Оттенок</div>
<div class="t" style="left:261px;top:292px">Насыщенность</div>
<div class="t" style="left:261px;top:312px">Солнечное освещение...</div>
<div class="ms" style="top:332px"></div>
<div class="t" style="left:261px;top:341px;letter-spacing:-0.1px">RGB Merge<span style="letter-spacing:-1.2px">...</span></div>
<div class="ms" style="top:361px"></div>
<div class="t" style="left:261px;top:370px">Fill</div>
<div class="t" style="left:261px;top:390px;letter-spacing:-0.15px">Equalize Color</div>
<div class="t" style="left:261px;top:410px;letter-spacing:-0.19px">Increase Contrast</div>
<div class="ms" style="top:430px"></div>
<div class="t" style="left:261px;top:439px">число цветов</div>
<svg style="left:447px;top:441px" width="6" height="8"><path d="M0.5 0 L5 3.5 L0.5 7 Z" fill="#000"/></svg>
</body></html>
